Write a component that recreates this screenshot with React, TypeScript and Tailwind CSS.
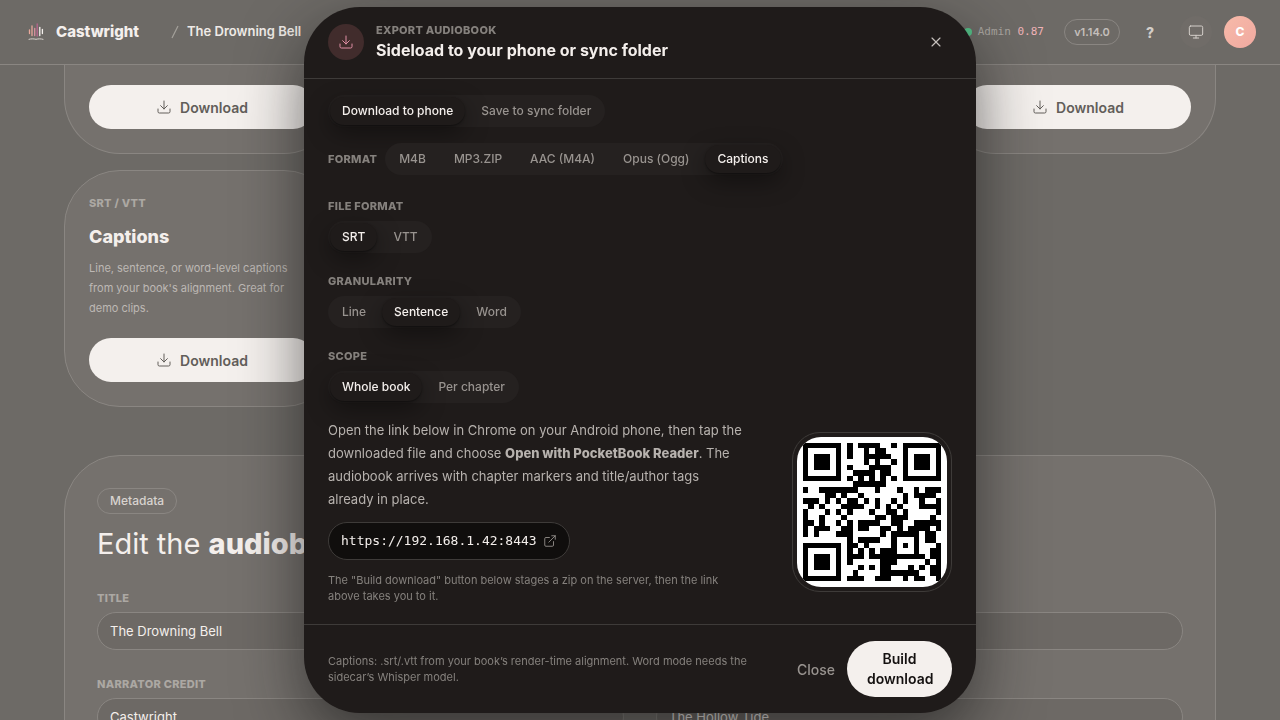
import React, { useState } from 'react';
import { Download, ExternalLink, Monitor, X } from 'lucide-react';

/* ---------- QR code (version 2, level M, mask 6) ---------- */

const QR_SIZE = 25;
const DATA_WORDS = 28;
const EC_WORDS = 16;
const FORMAT_BITS = '100111110010111';
const ALNUM = '0123456789ABCDEFGHIJKLMNOPQRSTUVWXYZ $%*+-./:';

function bits(value: number, length: number) {
  return value.toString(2).padStart(length, '0');
}

// scheme goes in byte mode, the rest fits the denser alphanumeric mode
function encodeData(scheme: string, rest: string) {
  let out = '0100' + bits(scheme.length, 8);
  for (const ch of scheme) out += bits(ch.charCodeAt(0), 8);
  out += '0010' + bits(rest.length, 9);
  for (let i = 0; i < rest.length; i += 2) {
    const a = ALNUM.indexOf(rest[i]);
    out += i + 1 < rest.length ? bits(a * 45 + ALNUM.indexOf(rest[i + 1]), 11) : bits(a, 6);
  }
  out += '0000';
  while (out.length % 8) out += '0';
  const words = (out.match(/.{8}/g) || []).map((b) => parseInt(b, 2));
  for (let pad = 0xec; words.length < DATA_WORDS; pad ^= 0xec ^ 0x11) words.push(pad);
  return words;
}

function gfMul(a: number, b: number) {
  let r = 0;
  for (; b; b >>= 1) {
    if (b & 1) r ^= a;
    a <<= 1;
    if (a & 256) a ^= 0x11d;
  }
  return r;
}

function errorWords(data: number[]) {
  let gen = [1];
  let root = 1;
  for (let i = 0; i < EC_WORDS; i++) {
    const next = [...gen, 0];
    gen.forEach((g, j) => { next[j + 1] ^= gfMul(g, root); });
    gen = next;
    root = gfMul(root, 2);
  }
  const rem = [...data, ...Array(EC_WORDS).fill(0)];
  for (let i = 0; i < data.length; i++) {
    const lead = rem[i];
    gen.forEach((g, j) => { rem[i + j] ^= gfMul(g, lead); });
  }
  return rem.slice(data.length);
}

function buildQr(scheme: string, rest: string) {
  const m: (number | null)[][] = Array.from({ length: QR_SIZE }, () => Array(QR_SIZE).fill(null));
  const last = QR_SIZE - 1;

  const finder = (r0: number, c0: number) => {
    for (let r = -1; r <= 7; r++) for (let c = -1; c <= 7; c++) {
      if (!m[r0 + r] || m[r0 + r][c0 + c] === undefined) continue;
      const d = Math.max(Math.abs(r - 3), Math.abs(c - 3));
      m[r0 + r][c0 + c] = d === 2 || d === 4 ? 0 : 1;
    }
  };
  finder(0, 0);
  finder(0, last - 6);
  finder(last - 6, 0);
  for (let r = -2; r <= 2; r++) for (let c = -2; c <= 2; c++) {
    m[18 + r][18 + c] = Math.max(Math.abs(r), Math.abs(c)) === 1 ? 0 : 1;
  }
  for (let i = 8; i < 17; i++) m[6][i] = m[i][6] = (i + 1) % 2;

  const f = FORMAT_BITS.split('').map(Number);
  [0, 1, 2, 3, 4, 5, 7, 8].forEach((c, i) => { m[8][c] = f[i]; });
  [7, 5, 4, 3, 2, 1, 0].forEach((r, i) => { m[r][8] = f[8 + i]; });
  for (let i = 0; i < 7; i++) m[last - i][8] = f[i];
  for (let i = 0; i < 8; i++) m[8][17 + i] = f[7 + i];
  m[17][8] = 1;

  const data = encodeData(scheme, rest);
  const stream = [...data, ...errorWords(data)].map((w) => bits(w, 8)).join('');
  let n = 0;
  let up = true;
  for (let col = last; col > 0; col -= 2) {
    if (col === 6) col--;
    for (let i = 0; i < QR_SIZE; i++) {
      const r = up ? last - i : i;
      for (const c of [col, col - 1]) {
        if (m[r][c] !== null) continue;
        const bit = Number(stream[n++] || 0);
        const flip = (((r * c) % 2) + ((r * c) % 3)) % 2 === 0 ? 1 : 0;
        m[r][c] = bit ^ flip;
      }
    }
    up = !up;
  }
  return m;
}

const qr = buildQr('https', '://192.168.1.42:8443');

function QrCode() {
  let d = '';
  qr.forEach((row, r) => row.forEach((v, c) => { if (v) d += `M${c + 1} ${r + 1}h1v1h-1z`; }));
  return (
    <svg viewBox="0 0 27 27" width="150" height="150" shapeRendering="crispEdges" role="img" aria-label="QR code" className="rounded-3xl bg-white">
      <path d={d} fill="#000" />
    </svg>
  );
}

/* ---------- Shared bits ---------- */

function Logo() {
  return (
    <svg width="16" height="18" viewBox="0 0 16 18" fill="none" strokeWidth="1.3" strokeLinecap="round">
      <path d="M1.5 7v3.5" stroke="#e9a99b" />
      <path d="M4 3v9.5" stroke="#eaa79c" />
      <path d="M6.7 5.5v7" stroke="#d98fa0" />
      <path d="M9.2 1v12" stroke="#b8668f" />
      <path d="M11.8 4.5v8" stroke="#f4efec" />
      <path d="M14.4 6.5v4" stroke="#f4efec" />
      <path d="M1 16.3c2-.6 4.5-.6 7 0 2.500-.6 5-.6 7 0" stroke="#d8d3ce" strokeWidth="1" />
    </svg>
  );
}

function Eyebrow({ children, dim }: { children: React.ReactNode; dim?: boolean }) {
  return (
    <span className={`block text-[11px] leading-[17px] font-extrabold tracking-wide uppercase ${dim ? 'text-[#85817d]' : 'text-[#aca8a3]'}`}>
      {children}
    </span>
  );
}

function Segmented({ options, initial, label }: { options: string[]; initial: string; label: string }) {
  const [active, setActive] = useState(initial);
  return (
    <div role="group" aria-label={label} className="inline-flex gap-1 rounded-full bg-[#252120] p-0.5">
      {options.map((o) => (
        <button
          key={o}
          type="button"
          aria-pressed={o === active}
          onClick={() => setActive(o)}
          className={`h-7 rounded-full px-3 text-[12px] font-medium whitespace-nowrap ${
            o === active
              ? 'bg-[#1f1b1a] text-[#f4efec] shadow-[0_1px_2px_rgba(0,0,0,0.4),0_8px_24px_rgba(0,0,0,0.4)]'
              : 'text-[#98938f]'
          }`}
        >
          {o}
        </button>
      ))}
    </div>
  );
}

function DownloadButton() {
  return (
    <button type="button" className="flex h-11 w-full items-center justify-center gap-2 rounded-full bg-[#f4f0ed] text-[14px] font-semibold text-[#625e5a]">
      <Download size={16} strokeWidth={1.5} />
      Download
    </button>
  );
}

function Field({ id, label, value }: { id: string; label: string; value: string }) {
  return (
    <div>
      <label htmlFor={id}><Eyebrow>{label}</Eyebrow></label>
      <input
        id={id}
        defaultValue={value}
        className="mt-[5px] h-[38px] w-full rounded-full border border-[#8a8682] bg-[#6d6965] px-3 text-[13px] text-[#f4efec]"
      />
    </div>
  );
}

/* ---------- Page behind the dialog ---------- */

function TopBar() {
  return (
    <header className="flex h-[65px] items-center border-b border-[#8a8682] px-6">
      <div className="flex items-center pl-1">
        <Logo />
        <span className="ml-3 text-[15px] font-extrabold text-[#f4efec]">Castwright</span>
        <svg width="8" height="14" viewBox="0 0 8 14" className="ml-8" aria-hidden="true">
          <path d="M1 13L7 1" stroke="#a39f9a" strokeWidth="1.2" />
        </svg>
        <a href="#book" className="ml-2 text-[13px] font-semibold text-[#efeae7]">The Drowning Bell</a>
      </div>
      <div className="ml-auto flex items-center">
        <span className="size-2 rounded-full bg-[#55c48a]" />
        <span className="ml-1.5 font-['DejaVu_Sans_Mono',monospace] text-[11px] text-[#aaa6a1]">
          Admin <span className="text-[#f0b3b8]">0.87</span>
        </span>
        <span className="ml-5 flex h-[26px] w-14 items-center justify-center rounded-full border border-[#8a8682] text-[11px] font-semibold text-[#c4bfbb]">v1.14.0</span>
        <button type="button" aria-label="Help" className="ml-3 h-8 w-9 text-[14px] font-extrabold text-[#d3cec9]">?</button>
        <button type="button" aria-label="Theme" className="ml-3 flex size-8 items-center justify-center rounded-full bg-[#706c68] text-[#d3cec9]">
          <Monitor size={16} strokeWidth={1.5} />
        </button>
        <span className="ml-3 flex size-8 items-center justify-center rounded-full bg-linear-to-br from-[#f7baa9] to-[#f0a9a0] text-[12px] font-extrabold text-white">C</span>
      </div>
    </header>
  );
}

function Page() {
  return (
    <div className="h-screen overflow-hidden bg-[#6d6a66]">
      <TopBar />
      <main className="mx-auto max-w-6xl">
        <div className="grid grid-cols-4 gap-4">
          {[0, 1, 2, 3].map((n) => (
            <div key={n} className="rounded-b-[56px] border border-t-0 border-[#8a8682] bg-[#75716d] px-6 pt-5 pb-6">
              <DownloadButton />
            </div>
          ))}
          <div className="rounded-[56px] border border-[#8a8682] bg-[#75716d] p-6">
            <Eyebrow>SRT / VTT</Eyebrow>
            <h3 className="mt-[11px] text-[18px] leading-[27px] font-extrabold text-[#f4efec]">Captions</h3>
            <p className="mt-2 pr-4 text-[11px] leading-5 text-[#bdb8b4]">
              Line, sentence, or word-level captions from your book's alignment. Great for demo clips.
            </p>
            <div className="mt-5"><DownloadButton /></div>
          </div>
        </div>

        <section className="mt-12 h-[480px] rounded-[56px] border border-[#8a8682] bg-[#75716d] p-8">
          <div className="flex">
            <span className="flex h-[26px] items-center rounded-full border border-[#8a8682] px-3 text-[12px] font-medium text-[#d8d3cf]">Metadata</span>
          </div>
          <h2 className="mt-3 text-[29px] leading-9 text-[#f4efec]">
            Edit the <strong className="font-extrabold">audiobook</strong>
          </h2>
          <div className="mt-7"><Field id="title" label="Title" value="The Drowning Bell" /></div>
          <div className="mt-[26px] grid grid-cols-2 gap-8">
            <Field id="narrator" label="Narrator credit" value="Castwright" />
            <Field id="series" label="Series" value="The Hollow Tide" />
          </div>
        </section>
      </main>
    </div>
  );
}

/* ---------- Export dialog ---------- */

function ExportDialog() {
  return (
    <div className="fixed inset-0 flex items-center justify-center">
      <div
        role="dialog"
        aria-labelledby="export-title"
        className="w-full max-w-2xl rounded-[56px] bg-[#1f1b1a] shadow-[0_24px_64px_rgba(20,20,20,0.6)]"
      >
        <div className="flex items-center gap-3 border-b border-[#3e3b39] px-6 pt-[15px] pb-[17px]">
          <span className="flex size-9 items-center justify-center rounded-full bg-[#412c2c] text-[#e08fa5]">
            <Download size={16} strokeWidth={1.5} />
          </span>
          <div>
            <Eyebrow dim>Export audiobook</Eyebrow>
            <h2 id="export-title" className="text-[16px] leading-[22px] font-bold text-[#f4efec]">
              Sideload to your phone or sync folder
            </h2>
          </div>
          <button type="button" aria-label="Close dialog" className="ml-auto flex size-8 items-center justify-center text-[#c4bfbb]">
            <X size={16} strokeWidth={1.75} />
          </button>
        </div>

        <div className="px-6 pt-4 pb-5">
          <div className="flex">
            <Segmented label="Destination" options={['Download to phone', 'Save to sync folder']} initial="Download to phone" />
          </div>
          <div className="mt-4 flex items-center gap-2">
            <Eyebrow dim>Format</Eyebrow>
            <Segmented label="Format" options={['M4B', 'MP3.ZIP', 'AAC (M4A)', 'Opus (Ogg)', 'Captions']} initial="Captions" />
          </div>

          <div className="mt-[23px] flex flex-col gap-5">
            <div className="flex flex-col items-start gap-1.5">
              <Eyebrow dim>File format</Eyebrow>
              <Segmented label="File format" options={['SRT', 'VTT']} initial="SRT" />
            </div>
            <div className="flex flex-col items-start gap-1.5">
              <Eyebrow dim>Granularity</Eyebrow>
              <Segmented label="Granularity" options={['Line', 'Sentence', 'Word']} initial="Sentence" />
            </div>
            <div className="flex flex-col items-start gap-1.5">
              <Eyebrow dim>Scope</Eyebrow>
              <Segmented label="Scope" options={['Whole book', 'Per chapter']} initial="Whole book" />
            </div>
          </div>

          <div className="mt-4 flex items-center gap-10">
            <div className="flex-1">
              <p className="pr-2 text-[13px] leading-[23px] text-[#b7b2ae]">
                Open the link below in Chrome on your Android phone, then tap the downloaded file and choose{' '}
                <strong className="font-extrabold">Open with PocketBook Reader</strong>. The audiobook arrives with
                chapter markers and title/author tags already in place.
              </p>
              <a
                href="https://192.168.1.42:8443"
                className="mt-[11px] inline-flex h-[38px] items-center gap-1.5 rounded-full border border-[#3e3b39] bg-[#100e0d] px-3 align-top font-['DejaVu_Sans_Mono',monospace] text-[13px] text-[#f4efec]"
              >
                https://192.168.1.42:8443
                <ExternalLink size={14} strokeWidth={1.5} className="text-[#98938f]" />
              </a>
              <p className="mt-3 text-[11px] leading-4 text-[#85817d]">
                The "Build download" button below stages a zip on the server, then the link above takes you to it.
              </p>
            </div>
            <div className="rounded-[28px] border border-[#3e3b39] p-1">
              <QrCode />
            </div>
          </div>
        </div>

        <div className="flex items-center border-t border-[#3e3b39] px-6 py-4">
          <p className="flex-1 text-[11px] leading-4 text-[#85817d]">
            Captions: .srt/.vtt from your book’s render-time alignment. Word mode needs the sidecar’s Whisper model.
          </p>
          <button type="button" className="ml-4 px-3 text-[14px] font-medium text-[#98938f]">Close</button>
          <button type="button" className="h-14 w-[105px] rounded-full bg-[#f4f0ed] px-5 text-[14px] leading-5 font-semibold text-[#141110]">
            Build download
          </button>
        </div>
      </div>
    </div>
  );
}

export default function App() {
  return (
    <div className="font-['Inter',sans-serif]">
      <Page />
      <ExportDialog />
    </div>
  );
}
